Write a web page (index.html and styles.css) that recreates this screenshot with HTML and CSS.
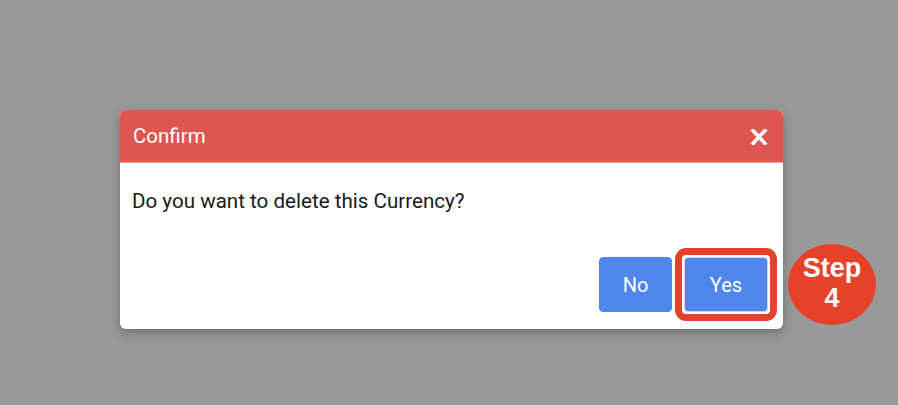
FILE: index.html
```html
<!DOCTYPE html>
<html>
<head>
<meta charset="utf-8">
<link rel="stylesheet" href="styles.css">
</head>
<body>
<div class="stage">
  <div class="modal">
    <div class="modal-header">
      <span class="modal-title">Confirm</span>
      <svg class="close" width="18" height="16" viewBox="0 0 18 16">
        <path d="M3 1.5 L15 14.5 M15 1.5 L3 14.5" stroke="#fff" stroke-width="3.6" stroke-linecap="square" fill="none"/>
      </svg>
    </div>
    <div class="modal-body">
      <p class="message">Do you want to delete this Currency?</p>
    </div>
    <div class="modal-footer">
      <button class="btn">No</button>
      <span class="highlight"><button class="btn btn-yes">Yes</button></span>
    </div>
    <div class="step">Step<br>4</div>
  </div>
</div>
</body>
</html>
```
FILE: styles.css
```css
html, body {
  margin: 0;
  padding: 0;
}
body {
  background: #999999;
  width: 898px;
  height: 405px;
  overflow: hidden;
  font-family: Roboto, "Liberation Sans", sans-serif;
}
.stage {
  padding: 110px 0 0 120px;
}
.modal {
  position: relative;
  width: 663px;
  height: 219px;
  background: #fff;
  border-radius: 6px;
  box-shadow: 0 4px 12px rgba(0,0,0,0.28);
  display: flex;
  flex-direction: column;
}
.modal-header {
  height: 52px;
  background: #e05550;
  border-bottom: 1px solid #ee9a96;
  border-radius: 6px 6px 0 0;
  display: flex;
  align-items: center;
  justify-content: space-between;
  padding: 0 15px 0 13px;
}
.modal-title {
  color: #fff;
  font-size: 20.5px;
  line-height: 24px;
}
.close {
  display: block;
  margin-top: 2px;
}
.modal-body {
  padding: 26px 13px 0 12px;
}
.message {
  margin: 0;
  font-size: 20.6px;
  line-height: 24px;
  color: #1a1a1a;
}
.modal-footer {
  margin-top: auto;
  display: flex;
  justify-content: flex-end;
  align-items: center;
  gap: 3px;
  padding: 0 6px 8px 0;
}
.btn {
  font-family: Roboto, "Liberation Sans", sans-serif;
  font-size: 20px;
  color: #fff;
  background: #4f86ec;
  border: 1px solid #4f86ec;
  border-radius: 4px;
  width: 73px;
  height: 55px;
  padding: 0;
}
.highlight {
  display: block;
  border: 7px solid #e8412a;
  border-radius: 11px;
  padding: 2px;
}
.btn-yes {
  display: block;
  width: 84px;
  border-color: #c9d6f2;
}
.step {
  position: absolute;
  left: 668px;
  top: 134px;
  width: 88px;
  height: 81px;
  box-sizing: border-box;
  padding-bottom: 4px;
  border-radius: 50%;
  background: #e8412a;
  color: #fff;
  font-family: "Liberation Sans", Arial, sans-serif;
  font-weight: bold;
  font-size: 27px;
  line-height: 30px;
  text-align: center;
  display: flex;
  flex-direction: column;
  justify-content: center;
}
```
